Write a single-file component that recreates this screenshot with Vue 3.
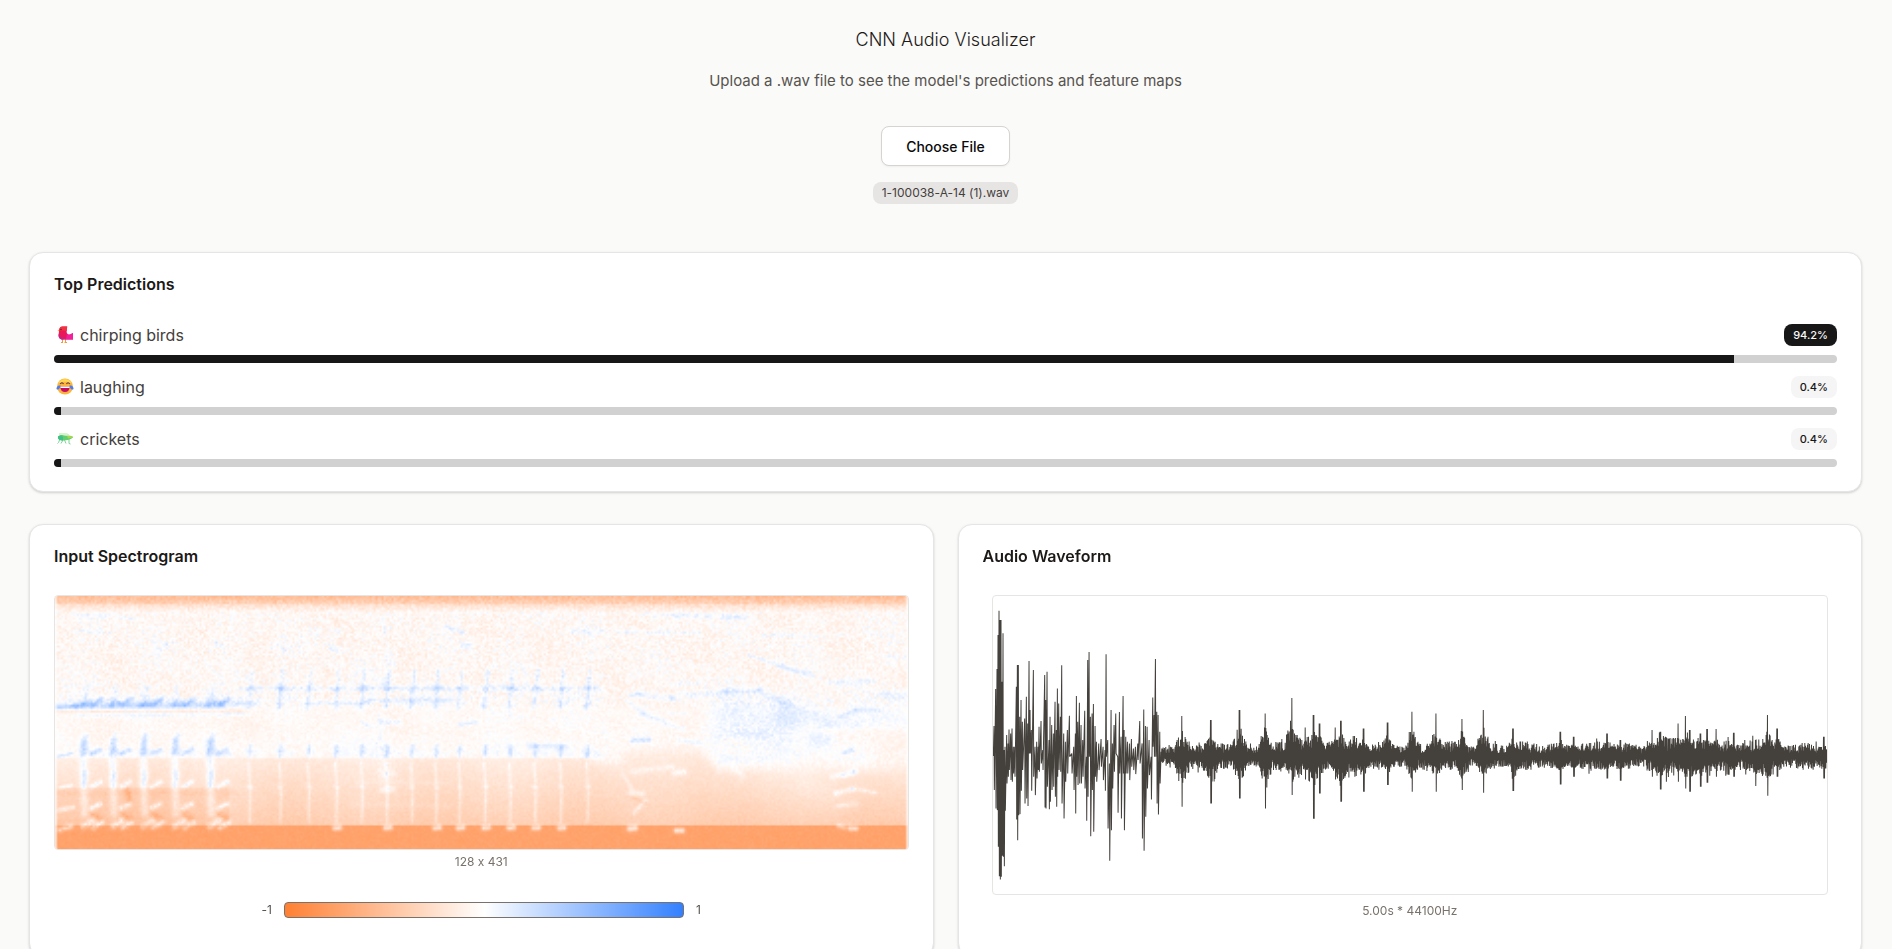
<script setup>
import { onMounted, ref } from 'vue'

const fileName = '1-100038-A-14 (1).wav'
const picker = ref(null)
const spectrogram = ref(null)

const predictions = [
  { label: 'chirping birds', icon: 'bird', value: 94.2 },
  { label: 'laughing', icon: 'laugh', value: 0.4 },
  { label: 'crickets', icon: 'cricket', value: 0.4 },
]

function randomizer(seed) {
  let s = seed
  return () => {
    s = (s * 1664525 + 1013904223) % 4294967296
    return s / 4294967296
  }
}

/* ---------- waveform: [x, top, bottom] with the axis at y = 498 ---------- */
const AXIS = 498
const onset = [
  [42,408,600],[47,297,655],[51,237,660],[54,135,770],[57,62,858],[60,90,868],[63,90,860],[66,275,797],[69,130,800],[72,480,828],
  [75,470,662],[80,435,580],[84,460,560],[87,418,540],[92,430,570],[96,415,575],[100,470,550],[104,470,560],[109,290,688],[112,225,750],[115,225,675],[119,380,672],
  [123,330,602],[127,395,540],[134,385,640],[139,320,625],[143,400,648],[147,213,490],[150,360,490],[154,420,602],[160,240,560],[165,470,615],
  [170,455,565],[174,470,540],[177,410,545],[183,393,520],[188,480,540],[194,255,652],[197,330,655],[201,245,590],[207,450,657],[210,380,635],[215,405,600],
  [220,430,590],[225,335,620],[229,420,650],[232,295,560],[236,340,540],[241,380,545],[245,226,640],[251,430,685],[256,455,575],[262,420,550],
  [268,377,500],[275,490,550],[281,470,600],[286,430,670],[289,318,560],[293,395,585],[298,338,580],[303,405,580],[308,450,560],[314,362,595],
  [319,500,692],[323,210,620],[327,186,500],[331,380,738],[336,370,600],[340,342,725],[345,408,560],[349,455,575],[356,460,540],[363,447,530],
  [369,470,570],[375,480,602],[378,193,500],[383,450,715],[388,520,812],[393,360,720],[397,460,595],[402,405,545],[407,370,490],[413,500,668],
  [418,366,550],[423,440,685],[429,318,550],[432,420,720],[437,440,550],[442,455,550],[448,460,570],[454,447,530],[460,475,540],[466,470,552],
  [473,460,510],[479,393,520],[486,460,745],[491,358,782],[496,408,680],[501,410,595],[507,450,555],[513,500,628],[518,322,470],[522,375,500],
  [526,207,500],[530,365,640],[534,375,673],[539,425,580],
]
/* [x, rise above the axis, fall below the axis] */
const bursts = [
  [605,120,152],[692,108,142],[778,138,127],[855,128,157],[935,174,117],[975,86,70],[1000,123,188],[1018,98,112],[1065,86,70],[1082,106,137],
  [1150,83,107],[1222,101,87],[1295,133,107],[1367,128,107],[1445,111,102],[1509,138,110],[1598,83,105],[1740,73,85],[1780,58,62],[1880,68,67],
  [1920,48,74],[2015,78,62],[2040,73,100],[2093,98,77],[2115,120,97],[2128,78,107],[2160,68,92],[2180,81,80],[2207,81,62],[2260,70,62],
  [2325,48,90],[2361,123,119],[2390,83,62],[2530,58,67],
]

function wavePath() {
  const rnd = randomizer(77)
  const points = ['M40 498']
  for (const [x, top, bottom] of onset) {
    points.push(`L${x} ${top}L${x + 1} ${bottom}`)
  }
  for (let x = 543; x < 2541; x += 2) {
    let up = 36
    let down = 37
    if (x < 585) { up = 30; down = 26 }
    if (x > 945 && x < 1130) { up = 54; down = 56 }
    if (x > 2000 && x < 2250) { up = 50; down = 54 }
    if (x > 2290 && x < 2400) { up = 48; down = 52 }
    const swell = 0.9 + 0.18 * Math.sin(x / 23) * Math.sin(x / 61)
    let r1 = up * swell * (0.3 + rnd() * 0.9) + (rnd() > 0.94 ? 18 * rnd() : 0)
    let r2 = down * swell * (0.3 + rnd() * 0.9) + (rnd() > 0.94 ? 20 * rnd() : 0)
    for (const [bx, bu, bd] of bursts) {
      const d = Math.abs(x - bx)
      if (d < 20) {
        const near = d < 2 ? 1 : 0.72 - d / 48
        r1 = Math.max(r1, bu * near * (d < 2 ? 1 : 0.35 + rnd() * 0.65))
        r2 = Math.max(r2, bd * near * (d < 2 ? 1 : 0.35 + rnd() * 0.65))
      }
    }
    points.push(`L${x} ${Math.round(AXIS - r1)}L${x + 1} ${Math.round(AXIS + r2)}`)
  }
  return points.join('')
}
const waveform = wavePath()

/* ---------- spectrogram: 431 frames by 128 mel bands ---------- */
const COLS = 431
const ROWS = 128
const CELL = 5.94

function buildSpectrogram() {
  const rnd = randomizer(12345)
  const grid = new Float32Array(COLS * ROWS)
  const ramp = (a, b, t) => Math.max(0, Math.min(1, (t - a) / (b - a)))

  for (let r = 0; r < ROWS; r++) {
    for (let c = 0; c < COLS; c++) {
      const x = c * CELL
      const y = r * CELL
      const n = rnd() + rnd() - 1
      const floor = 484 - 26 * ramp(1680, 1760, x) + 54 * ramp(1930, 1990, x)
      const depth = ramp(floor, 684, y)
      const edge = x < 1600 ? ramp(floor - 4, floor + 4, y) : ramp(floor - 24, floor + 24, y)
      let v
      if (y < 22) v = -0.5 + n * 0.14 + y * 0.008
      else if (y < 50) v = -0.24 + (y - 22) * 0.008 + n * 0.12
      else if (y < 684) {
        const upper = -0.05 + n * (y < 330 ? 0.13 : 0.07) + 0.03 * Math.sin(x / 130 + y / 60) * Math.sin(x / 47 - y / 90)
        const lower = -0.15 - depth * 0.23 + n * 0.045 + 0.025 * Math.sin(x / 70 + 1)
        v = upper * (1 - edge) + lower * edge
      } else v = -0.72 + n * 0.04
      if (x < 520 && y > 575 && y < 684) v -= 0.08
      grid[r * COLS + c] = v
    }
  }

  /* soft line from (x0, y0) to (x1, y1) */
  const line = (x0, y0, x1, y1, w, amount, grain = 0.5) => {
    const len = (x1 - x0) ** 2 + (y1 - y0) ** 2 || 1
    const m = w * 2.2
    const ca = Math.max(0, Math.floor((Math.min(x0, x1) - m) / CELL))
    const cb = Math.min(COLS - 1, Math.ceil((Math.max(x0, x1) + m) / CELL))
    const ra = Math.max(0, Math.floor((Math.min(y0, y1) - m) / CELL))
    const rb = Math.min(ROWS - 1, Math.ceil((Math.max(y0, y1) + m) / CELL))
    for (let r = ra; r <= rb; r++) {
      for (let c = ca; c <= cb; c++) {
        const x = c * CELL
        const y = r * CELL
        const t = Math.max(0, Math.min(1, ((x - x0) * (x1 - x0) + (y - y0) * (y1 - y0)) / len))
        const d2 = (x - x0 - t * (x1 - x0)) ** 2 + (y - y0 - t * (y1 - y0)) ** 2
        grid[r * COLS + c] += amount * Math.exp(-d2 / (w * w)) * (1 - grain * rnd())
      }
    }
  }

  /* first call: five double chirps with their harmonics */
  line(0, 318, 560, 314, 16, 0.12, 0.7)
  line(0, 332, 60, 328, 7, 0.42, 0.3)
  line(60, 328, 500, 325, 9, 0.3, 0.4)
  line(500, 322, 600, 322, 9, 0.16)
  line(0, 345, 580, 342, 4, -0.16)
  line(60, 356, 580, 352, 6, 0.14)
  line(5, 480, 50, 470, 5, 0.3)
  line(10, 574, 45, 566, 5, 0.34)
  line(10, 640, 50, 632, 7, 0.34)
  line(10, 700, 45, 690, 8, 0.5)
  for (const x of [82, 170, 262, 356, 462]) {
    line(x, 322, x + 8, 275, 10, 0.15)
    line(x - 5, 324, x + 18, 316, 9, 0.2, 0.3)
    line(x + 28, 324, x + 56, 306, 8, 0.32, 0.3)
    line(x - 4, 470, x, 432, 9, 0.3)
    line(x + 8, 466, x + 8, 415, 9, 0.2)
    line(x + 24, 472, x + 52, 458, 7, 0.3)
    line(x, 462, x + 60, 472, 12, 0.1)
    line(x, 495, x + 4, 650, 13, 0.24, 0.25)
    line(x, 565, x + 6, 530, 9, 0.2)
    line(x + 26, 570, x + 52, 555, 7, 0.34)
    line(x + 26, 634, x + 50, 622, 8, 0.38)
    line(x, 690, x + 28, 672, 10, 0.4)
    line(x + 30, 694, x + 56, 678, 8, 0.42)
    line(x + 30, 655, x + 50, 665, 10, -0.2)
  }
  line(215, 582, 220, 610, 9, -0.24)
  line(10, 590, 540, 588, 10, -0.07)

  /* second call: evenly spaced ticks */
  const ticks = [583, 675, 760, 843, 920, 995, 1070, 1143, 1213, 1290, 1365, 1440, 1517, 1597]
  const spots = [3, 5, 7, 8, 9, 10, 11, 12]
  ticks.forEach((x, i) => {
    line(x - 5, 332, x + 6, 222, 6, 0.21, 0.6)
    line(x - 4, 275, x + 34, 275, 9, 0.14, 0.8)
    line(x - 24, 275, x + 14, 275, 9, 0.14, 0.8)
    line(x - 10, 326, x + 32, 305, 15, 0.09, 0.8)
    line(x - 3, 480, x, 448, 6, 0.24)
    line(x - 8, 462, x + 30, 472, 12, 0.09)
    line(x - 5, 500, x, 580, 5, 0.14, 0.4)
    line(x, 590, x - 2, 675, 5, 0.18, 0.4)
    line(x - 6, 570, x + 3, 572, 6, 0.12)
    if (spots.includes(i)) line(x - 6, 694, x + 8, 693, 8, 0.6, 0.2)
  })
  line(570, 275, 1680, 273, 7, 0.08, 0.9)
  line(760, 322, 940, 318, 6, 0.16)
  line(940, 312, 1190, 310, 6, 0.18)
  line(560, 440, 1600, 440, 26, 0.03)
  line(980, 376, 1030, 376, 8, 0.22)
  line(1210, 384, 1260, 376, 7, 0.22)
  line(920, 375, 940, 390, 6, 0.16)
  line(990, 240, 985, 270, 12, 0.13)
  line(970, 370, 985, 540, 24, 0.12, 0.9)
  line(980, 530, 1010, 530, 10, 0.14)
  line(980, 580, 1010, 578, 10, 0.2)
  line(900, 555, 1180, 560, 6, 0.05)
  line(900, 622, 1180, 628, 8, 0.05)
  line(1420, 446, 1530, 450, 9, 0.2)
  line(1300, 350, 1560, 380, 24, 0.08, 0.8)
  line(1590, 470, 1680, 495, 24, 0.13, 0.8)
  line(1630, 400, 1660, 440, 28, 0.09, 0.8)

  /* faint high-frequency traces */
  line(60, 55, 160, 58, 7, 0.15, 0.9)
  line(180, 58, 230, 65, 6, 0.15, 0.9)
  line(55, 102, 160, 106, 5, 0.15, 0.9)
  line(310, 150, 350, 140, 10, 0.14, 0.9)
  line(480, 140, 500, 152, 11, 0.16, 0.8)
  line(660, 145, 690, 155, 14, 0.15, 0.8)
  line(830, 98, 850, 108, 9, 0.16)
  line(828, 150, 840, 160, 12, 0.14)
  line(985, 94, 985, 105, 6, 0.18)
  line(1000, 170, 1000, 200, 16, 0.14, 0.8)
  line(1170, 90, 1220, 105, 6, 0.16)
  line(1220, 145, 1250, 142, 8, 0.14)
  line(1540, 103, 1640, 106, 7, 0.12)
  line(1690, 105, 1930, 108, 6, 0.16)
  line(1750, 54, 1860, 57, 5, 0.12)
  line(1860, 57, 1970, 57, 6, 0.2)
  line(2000, 58, 2065, 62, 8, 0.16)
  line(2120, 115, 2380, 116, 4, 0.13)
  line(2080, 175, 2180, 206, 6, 0.15)
  line(2170, 208, 2270, 234, 7, 0.22)
  line(2480, 180, 2560, 182, 9, 0.1)
  line(2320, 256, 2450, 252, 7, 0.16)
  line(1860, 260, 1930, 260, 5, 0.15)

  /* closing phrase: drifting tones and a broad haze */
  line(1725, 295, 1750, 293, 7, 0.22)
  line(1750, 292, 1850, 304, 8, 0.16)
  line(1850, 304, 2010, 285, 11, 0.15)
  line(2010, 285, 2110, 280, 7, 0.2)
  line(2110, 284, 2190, 322, 14, 0.17)
  line(2190, 322, 2320, 365, 24, 0.08, 0.7)
  line(1715, 310, 1760, 350, 8, 0.13)
  line(1760, 350, 1880, 398, 9, 0.15)
  line(1840, 350, 1900, 350, 7, 0.12)
  line(1730, 431, 1780, 429, 7, 0.3)
  line(1870, 430, 1930, 440, 7, 0.16)
  line(2020, 390, 2140, 430, 74, 0.16, 0.7)
  line(2050, 320, 2190, 360, 48, 0.1, 0.8)
  line(1995, 494, 2120, 490, 18, 0.12, 0.8)
  line(2040, 410, 2120, 412, 12, 0.11)
  line(2180, 366, 2540, 376, 26, 0.1, 0.7)
  line(2200, 330, 2560, 340, 44, 0.07, 0.9)
  line(2280, 430, 2310, 430, 28, 0.17, 0.6)
  line(2290, 386, 2400, 384, 10, 0.09)
  line(2355, 360, 2400, 340, 8, 0.16)
  line(2400, 338, 2480, 342, 6, 0.15)
  line(2490, 292, 2560, 302, 12, 0.16)
  line(2300, 305, 2320, 308, 9, 0.12)
  line(2200, 480, 2420, 490, 34, 0.05, 0.7)
  line(2365, 466, 2390, 460, 7, 0.22)
  line(2365, 535, 2395, 525, 9, 0.34)
  line(2330, 540, 2350, 535, 8, 0.2)
  line(2340, 590, 2390, 578, 8, 0.24)
  line(2390, 576, 2460, 588, 6, 0.2)
  line(2350, 628, 2400, 622, 9, 0.16)
  line(1730, 525, 1850, 510, 9, 0.14)
  line(1725, 588, 1760, 590, 9, 0.22)
  line(1770, 612, 1735, 648, 8, 0.18)
  line(1860, 528, 1885, 526, 10, 0.24)
  line(1700, 530, 1730, 580, 6, 0.12)
  line(1730, 602, 1770, 620, 5, -0.14)
  line(2250, 560, 2340, 620, 44, 0.05)
  line(2040, 520, 2060, 540, 12, 0.12)
  line(1722, 696, 1738, 694, 9, 0.64, 0.2)
  line(1862, 702, 1880, 702, 8, 0.6, 0.2)
  line(2350, 688, 2365, 692, 8, 0.34, 0.2)
  line(2384, 695, 2400, 695, 8, 0.56, 0.2)

  return grid
}

onMounted(() => {
  const ctx = spectrogram.value.getContext('2d')
  const image = ctx.createImageData(COLS, ROWS)
  const grid = buildSpectrogram()
  grid.forEach((value, i) => {
    const edge = i % COLS
    const v = edge === 0 || edge === COLS - 1 ? value * 0.35 : value
    const a = Math.min(1, Math.abs(v))
    const strong = 255 * (1 - 0.8 * a)
    image.data[i * 4] = v > 0 ? strong : 255
    image.data[i * 4 + 1] = 255 * (1 - 0.5 * a)
    image.data[i * 4 + 2] = v > 0 ? 255 : strong
    image.data[i * 4 + 3] = 255
  })
  ctx.putImageData(image, 0, 0)
})
</script>

<template>
  <main class="page">
    <header class="intro">
      <h1 class="title">CNN Audio Visualizer</h1>
      <p class="subtitle">Upload a .wav file to see the model's predictions and feature maps</p>
      <input ref="picker" type="file" accept=".wav" aria-label="Audio file" hidden />
      <button class="choose" type="button" @click="picker.click()">Choose File</button>
      <span class="badge file">{{ fileName }}</span>
    </header>

    <section class="card">
      <h2 class="card-title">Top Predictions</h2>
      <ul class="predictions">
        <li v-for="(p, i) in predictions" :key="p.label" class="prediction">
          <div class="row">
            <span class="label">
              <svg v-if="p.icon === 'bird'" class="emoji" viewBox="0 0 22 20" aria-hidden="true">
                <path d="M8.500 14V17.500M11.500 14V17.500M7 17.500H9M10.500 17.500H13" stroke="#f59a3c" stroke-width="1" fill="none" />
                <path d="M6 4L3.500 5.500L6 7Z" fill="#ffa832" />
                <path d="M8.500 1.500H13.200L12.600 7C13 9 14.500 9.800 16 9.500L19 8V14.500H8.500C5.500 14.500 4.300 12 4.600 9.500L5.200 5C5.400 2.600 6.600 1.500 8.500 1.500Z" fill="#e8185a" />
                <path d="M8.500 1.500H13.200L12.700 6C10 5.400 7.500 5.200 5.200 6.500V5C5.400 2.600 6.600 1.500 8.500 1.500Z" fill="#f5303f" />
                <path d="M12.500 8C13.500 10 15 10 16 9.500L19 8V14.500H11C13 12.500 13 10 12.500 8Z" fill="#f2209c" />
                <path d="M4.600 9C6 12.500 8 13.500 11.500 12.500L10.500 14.500H8.500C5.500 14.500 4.300 12 4.600 9Z" fill="#b92a8e" />
                <circle cx="7" cy="4.500" r="0.700" fill="#4b1738" />
              </svg>
              <svg v-else-if="p.icon === 'laugh'" class="emoji" viewBox="0 0 22 20" aria-hidden="true">
                <circle cx="11" cy="9.500" r="8" fill="#fcb43c" />
                <path d="M4 6.500A8 8 0 0 1 18 6.500C14 4 8 4 4 6.500Z" fill="#ffd94f" />
                <path d="M6.300 7Q8 4.500 9.500 7M12.500 7Q14 4.500 15.700 7" stroke="#5b3450" stroke-width="1.200" fill="none" />
                <path d="M6.200 9.500H15.800C15.500 13.300 13.800 15 11 15S6.500 13.300 6.200 9.500Z" fill="#c30d62" />
                <path d="M6.300 9.500H15.700L15.400 11H6.600Z" fill="#fff" />
                <path d="M2.500 11C3 9 5 8.300 6.500 8.300C6.200 10.200 5.800 12.400 4 12.600C2.900 12.600 2.300 12 2.500 11Z" fill="#4c7df0" />
                <path d="M19.500 11C19 9 17 8.300 15.500 8.300C15.800 10.200 16.200 12.400 18 12.600C19.100 12.600 19.700 12 19.500 11Z" fill="#4c7df0" />
              </svg>
              <svg v-else class="emoji" viewBox="0 0 22 20" aria-hidden="true">
                <path d="M6 10L4.500 13.500L3.500 14.500M9 11L7 14.500M10.500 11L12 14.500M15 10V14.500L16.500 15" stroke="#7fd29a" stroke-width="1" fill="none" />
                <path d="M4 7.500C5.500 6 8 5.500 11 6.500L18 7L19 8.500C17 10.500 13 11.500 9 11.500C6 11.500 3.500 10.500 4 7.500Z" fill="#63cd70" />
                <path d="M4 7.500C5.500 6 8 6 9 8V11.500C6 11.500 3.500 10.500 4 7.500Z" fill="#3fc088" />
                <path d="M5 5H13.500L15 6.500" stroke="#b4e79c" stroke-width="1" fill="none" />
                <path d="M13 6.700L18 7L19 8.500L14 9.500Z" fill="#a6d84d" />
              </svg>
              <span>{{ p.label }}</span>
            </span>
            <span class="badge percent" :class="i === 0 ? 'strong' : 'soft'">{{ p.value.toFixed(1) }}%</span>
          </div>
          <div class="track" role="progressbar" :aria-label="p.label" :aria-valuenow="p.value">
            <div class="fill" :style="{ width: p.value + '%' }"></div>
          </div>
        </li>
      </ul>
    </section>

    <div class="charts">
      <section class="card">
        <h2 class="card-title">Input Spectrogram</h2>
        <canvas ref="spectrogram" class="spectrogram" width="431" height="128" role="img" aria-label="Input spectrogram"></canvas>
        <p class="caption tight">128 x 431</p>
        <div class="legend">
          <span>-1</span>
          <div class="scale"></div>
          <span>1</span>
        </div>
      </section>

      <section class="card">
        <h2 class="card-title">Audio Waveform</h2>
        <div class="wave-wrap">
          <svg class="waveform" viewBox="39 18 2502 894" role="img" aria-label="Audio waveform">
            <path :d="waveform" fill="none" stroke="#44403c" stroke-width="3" stroke-linejoin="bevel" />
          </svg>
        </div>
        <p class="caption">5.00s * 44100Hz</p>
      </section>
    </div>
  </main>
</template>

<style>
html {
  background: #fafaf9;
  scrollbar-width: none;
}
</style>

<style scoped>
.page {
  box-sizing: border-box;
  padding: 28px 30px 32px 29px;
  display: flex;
  flex-direction: column;
  gap: 32px;
  background: #fafaf9;
  color: #1c1917;
  font-family: Inter, "Liberation Sans", sans-serif;
  font-feature-settings: "calt" 0;
}
.intro {
  display: flex;
  flex-direction: column;
  align-items: center;
  padding-bottom: 16px;
}
.title {
  margin: 0 0 16px;
  font-size: 18px;
  line-height: 24px;
  font-weight: 300;
}
.subtitle {
  margin: 0 0 32px;
  font-size: 15px;
  line-height: 26px;
  color: #57534e;
}
.choose {
  height: 40px;
  padding: 0 24px;
  border: 1px solid #d6d3d1;
  border-radius: 8px;
  background: #fff;
  box-shadow: 0 1px 2px rgba(0, 0, 0, 0.05);
  color: #0a0a0a;
  font-family: inherit;
  font-size: 14px;
  font-weight: 500;
  cursor: pointer;
}
.badge {
  box-sizing: border-box;
  height: 22px;
  padding: 0 9px;
  border-radius: 8px;
  font-size: 12px;
  line-height: 22px;
  white-space: nowrap;
}
.file {
  margin-top: 16px;
  background: #e7e5e4;
  color: #44403c;
}
.percent {
  font-size: 11px;
  font-weight: 500;
}
.strong {
  background: #171717;
  color: #fafafa;
}
.soft {
  background: #f5f5f5;
  color: #171717;
}
.card {
  box-sizing: border-box;
  min-width: 0;
  padding: 24px;
  border: 1px solid #e5e5e5;
  border-radius: 14px;
  background: #fff;
  box-shadow: 0 1px 3px rgba(0, 0, 0, 0.1), 0 1px 2px rgba(0, 0, 0, 0.08);
}
.card-title {
  margin: 0 0 32px;
  font-size: 16px;
  line-height: 14px;
  font-weight: 600;
}
.predictions {
  margin: 0;
  padding: 0;
  list-style: none;
  display: flex;
  flex-direction: column;
  gap: 12px;
}
.prediction {
  display: flex;
  flex-direction: column;
  gap: 8px;
}
.row {
  display: flex;
  align-items: center;
  justify-content: space-between;
  height: 24px;
}
.label {
  display: flex;
  align-items: center;
  gap: 4px;
  font-size: 16px;
  line-height: 24px;
  color: #44403c;
}
.emoji {
  width: 22px;
  height: 20px;
}
.track {
  height: 8px;
  border-radius: 4px;
  background: #d1d1d1;
  overflow: hidden;
}
.fill {
  height: 100%;
  background: #171717;
}
.charts {
  display: grid;
  grid-template-columns: 1fr 1fr;
  gap: 24px;
}
.spectrogram {
  display: block;
  box-sizing: border-box;
  width: 100%;
  height: auto;
  border: 1px solid #e7e5e4;
  border-radius: 4px;
}
.caption {
  margin: 8px 0 0;
  text-align: center;
  font-size: 12px;
  line-height: 16px;
  color: #79716b;
}
.tight {
  margin-top: 4px;
}
.legend {
  display: flex;
  align-items: center;
  justify-content: center;
  gap: 12px;
  margin: 32px 0 14px;
  font-size: 12px;
  line-height: 16px;
  color: #57534e;
}
.scale {
  box-sizing: border-box;
  width: 400px;
  height: 16px;
  border: 1px solid #79716b;
  border-radius: 4px;
  background: linear-gradient(to right, rgb(255, 128, 51), #fff, rgb(51, 128, 255));
}
.wave-wrap {
  padding: 0 9px;
}
.waveform {
  display: block;
  box-sizing: border-box;
  width: 100%;
  height: auto;
  border: 1px solid #e7e5e4;
  border-radius: 4px;
}
</style>
